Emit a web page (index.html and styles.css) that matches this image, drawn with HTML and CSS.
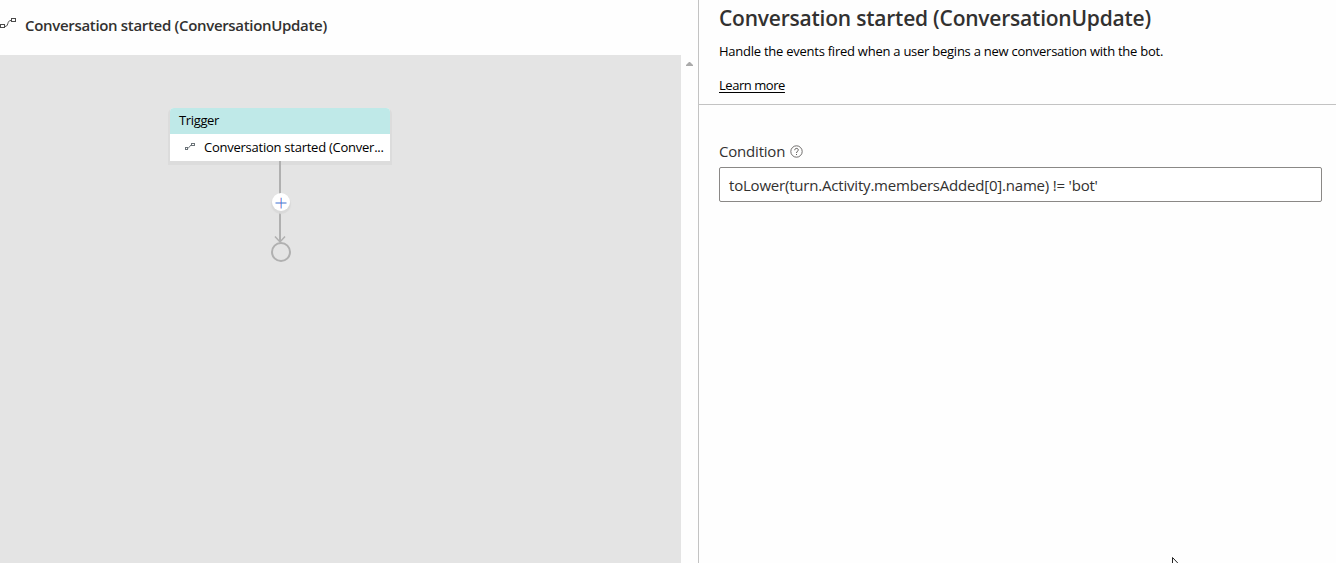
FILE: index.html
```
<!DOCTYPE html>
<html lang="en">
<head>
<meta charset="utf-8">
<title>Conversation started</title>
<link rel="stylesheet" href="styles.css">
</head>
<body>
<div class="app">
  <main class="editor">
    <header class="crumb">
      <svg class="crumb-icon" width="17" height="14" viewBox="0 0 17 14" fill="none" stroke="#4a4a4a"><rect x=".5" y="7.5" width="4" height="3"/><rect x="11.500" y="1.500" width="4" height="3"/><path d="M5 9.500C7.500 9.500 7.500 7 8.200 5.500S9.500 3.500 11 3.500"/></svg>
      <span class="crumb-text">Conversation started (ConversationUpdate)</span>
    </header>
    <div class="canvas-row">
      <div class="canvas">
        <svg class="edges" width="40" height="110" viewBox="0 0 40 110" fill="none" stroke="#b0b0b0"><path d="M19 0V81" stroke-width="2"/><path d="M14 75.500L19 81L24 75.500" stroke-width="1.500"/><circle cx="20" cy="91" r="9" stroke-width="2"/></svg>
        <section class="node">
          <div class="node-head"><span>Trigger</span></div>
          <div class="node-body">
            <svg width="12" height="10" viewBox="0 0 12 10" fill="none" stroke="#6b7378"><rect x="1.500" y="5.500" width="2" height="2"/><rect x="7.500" y="1.500" width="3" height="2"/><path d="M4 6.500L7 3"/></svg>
            <span class="node-text">Conversation started (Conver...</span>
          </div>
        </section>
        <button class="add" aria-label="Add"><svg width="12" height="12" viewBox="0 0 12 12" fill="none"><path d="M5.500 0V11" stroke="#f5b5cf"/><path d="M6.500 0V11" stroke="#7ab8f5"/><path d="M.5 5.500H11.500" stroke="#3d6fd0"/></svg></button>
      </div>
      <div class="scrollbar"><svg width="7" height="4" viewBox="0 0 7 4"><path d="M0 4V3L3 0H4L7 3V4Z" fill="#aaa"/></svg></div>
    </div>
  </main>
  <aside class="panel">
    <header class="panel-head">
      <h1><span>Conversation started (ConversationUpdate)</span></h1>
      <p>Handle the events fired when a user begins a new conversation with the bot.</p>
      <a href="#">Learn more</a>
    </header>
    <div class="form">
      <div class="label"><span>Condition</span>
        <svg width="13" height="13" viewBox="0 0 13 13" fill="none" stroke="#605e5c"><circle cx="6.500" cy="6.500" r="5.700" stroke-width=".9"/><path d="M4.700 5.200C4.700 2.800 8.300 2.800 8.300 5C8.300 6.300 6.500 6.300 6.500 8M6.500 9V10"/></svg>
      </div>
      <div class="input"><span>toLower(turn.Activity.membersAdded[0].name) != 'bot'</span></div>
    </div>
  </aside>
  <svg class="cursor" width="12" height="19" viewBox="0 0 12 19"><path d="M.5 .5V15L4 11.500L6 16L8 15L6 11H10.500Z" fill="#fff" stroke="#222"/></svg>
</div>
</body>
</html>
```
FILE: styles.css
```
* { box-sizing: border-box; }
body { margin: 0; font-family: "Open Sans", "Noto Sans", sans-serif; color: #000; background: #fefefe; }
.app { position: relative; display: flex; width: 1336px; height: 563px; overflow: hidden; white-space: nowrap; }
.editor { display: flex; flex-direction: column; width: 698px; }
.crumb { display: flex; align-items: center; gap: 8px; height: 55px; padding-bottom: 5px; color: #323130; }
.crumb-icon { margin-top: -3px; }
.crumb-text { font-size: 15px; font-weight: 600; letter-spacing: -.32px; }
.canvas-row { display: flex; flex: 1; }
.canvas { position: relative; width: 681px; background: #e4e4e4; }
.scrollbar { display: flex; justify-content: center; width: 17px; padding-top: 7px; }
.node { position: absolute; left: 170px; top: 53px; width: 220px; height: 53px; border-radius: 4px 4px 0 0; box-shadow: 0 2px 0 2px #dcdcdc; background: #fff; font-size: 13px; }
.node-head { height: 26px; padding-left: 9px; border-radius: 4px 4px 0 0; line-height: 25px; letter-spacing: -.35px; background: #bfe9e8; }
.node-body { display: flex; align-items: center; gap: 8px; height: 26px; padding-left: 14px; }
.node-text { letter-spacing: -.25px; }
.edges { position: absolute; left: 261px; top: 106px; z-index: 1; }
.add { position: absolute; left: 272px; top: 138px; z-index: 2; display: flex; align-items: center; justify-content: center; width: 18px; height: 18px; padding: 0; border: 0; border-radius: 50%; background: #fff; box-shadow: 0 2px 1px 1px #d9d9d9; }
.add svg { margin-top: 1px; flex: none; transform: translateY(.5px); }
.panel { width: 638px; border-left: 1px solid #c3c3c3; }
.panel-head { display: flex; flex-direction: column; align-items: flex-start; height: 105px; padding: 3px 0 0 20px; border-bottom: 1px solid #c3c3c3; }
h1 { margin: 0; font-size: 21px; font-weight: 600; line-height: 30px; letter-spacing: -.22px; color: #323130; }
p { margin: 9px 0 0; font-size: 13px; line-height: 18px; letter-spacing: -.25px; }
a { margin-top: 16px; font-size: 13px; line-height: 18px; letter-spacing: -.45px; color: #000; text-underline-offset: 2px; }
.form { padding: 36px 14px 0 20px; color: #323130; }
.label { display: flex; align-items: center; gap: 5px; height: 20px; font-size: 15px; letter-spacing: -.2px; }
.input { height: 35px; margin-top: 6px; padding-left: 9px; border: 1px solid #8a8886; border-radius: 2px; font-size: 15px; line-height: 35px; letter-spacing: -.2px; background: #fff; }
.cursor { position: absolute; left: 1172px; top: 557px; }
```
